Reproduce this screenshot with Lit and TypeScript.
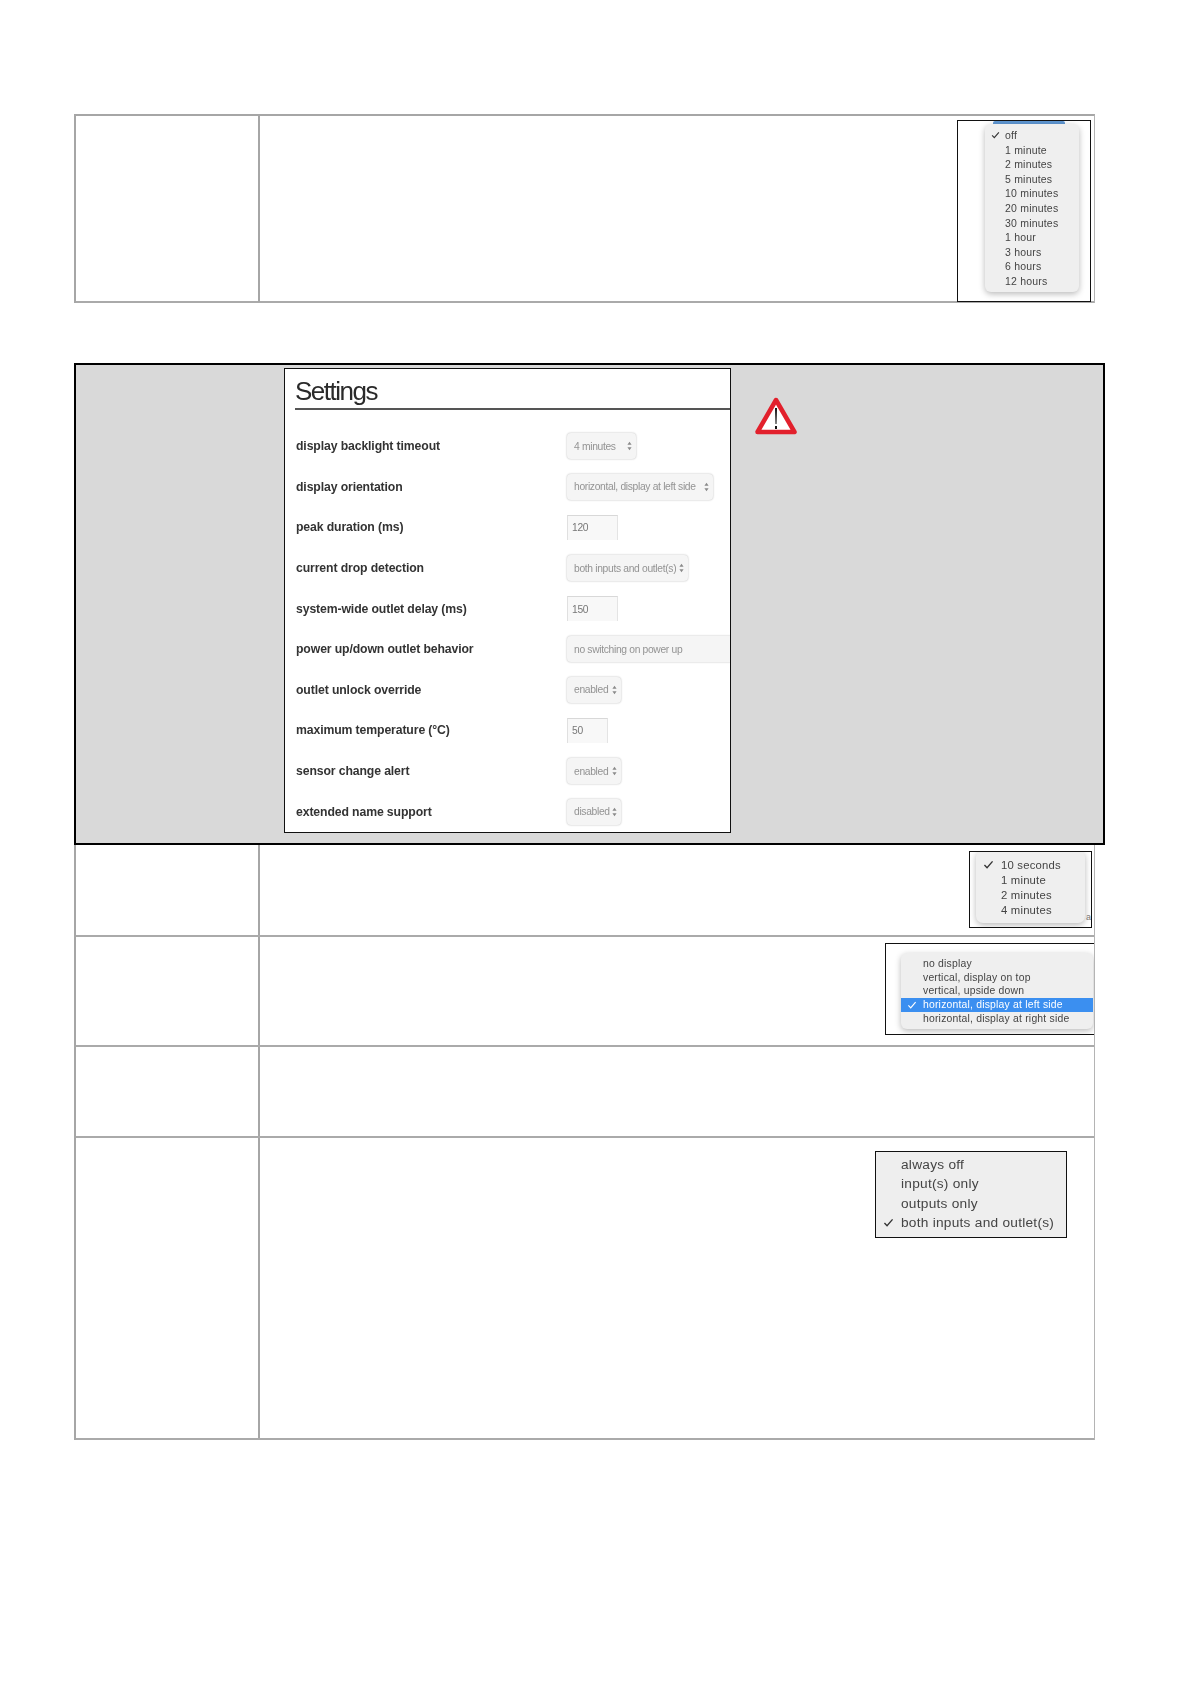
import { LitElement, html, css } from "lit";
import { customElement } from "lit/decorators.js";

const check = html`<svg class="check" viewBox="0 0 12 10"><path d="M1.5 5.5 L4.4 8.5 L10.5 1.5" fill="none" stroke="currentColor" stroke-width="1.5"/></svg>`;

type Item = [string, boolean?];
const menu = (cls: string, items: Item[], sel = -1) => html`<div class="menu ${cls}">
  ${items.map(([t, c], i) => html`<div class="item ${i === sel ? "sel" : ""}"><span class="slot">${c ? check : ""}</span><span>${t}</span></div>`)}
</div>`;

const caret = html`<svg class="caret" viewBox="0 0 6 11"><path d="M3 0.5 L5.5 4 L0.5 4 Z M3 10.5 L5.5 7 L0.5 7 Z" fill="#8a8a8a"/></svg>`;

const rows: [string, string, string][] = [
  ["display backlight timeout", "w69", "4 minutes"],
  ["display orientation", "w146", "horizontal, display at left side"],
  ["peak duration (ms)", "i51", "120"],
  ["current drop detection", "w121", "both inputs and outlet(s)"],
  ["system-wide outlet delay (ms)", "i51", "150"],
  ["power up/down outlet behavior", "wide", "no switching on power up"],
  ["outlet unlock override", "w54", "enabled"],
  ["maximum temperature (°C)", "i41", "50"],
  ["sensor change alert", "w54", "enabled"],
  ["extended name support", "w54", "disabled"],
];

@customElement("app-root")
export class AppRoot extends LitElement {
  static styles = css`
    :host { display: block; height: 1686px; background: #fff; font-family: "Liberation Sans", Arial, sans-serif; color: #333; }
    .page { padding: 114px 0 0 74px; display: flex; flex-direction: column; align-items: flex-start; }

    .table { width: 1021px; box-sizing: border-box; border-left: 2px solid #a6a6a6; border-right: 1px solid #b4b4b4; }
    .row { display: grid; grid-template-columns: 184px 1fr; border-bottom: 2px solid #aaa; box-sizing: border-box; }
    .row > .key { border-right: 2px solid #a6a6a6; }
    .row > .val { display: flex; justify-content: flex-end; align-items: flex-start; min-width: 0; }
    .t1 { border-top: 2px solid #a6a6a6; margin-bottom: 60px; }
    .r1 { height: 187px; }
    .r2 { height: 91.5px; }
    .r3 { height: 110px; }
    .r4 { height: 91px; }
    .r5 { height: 302px; }

    .shot { border: 1.5px solid #111; box-sizing: border-box; background: #fff; overflow: hidden; position: relative; display: flex; }
    .s1 { width: 134px; height: 182px; margin: 4px 3px 0 0; padding: 3px 0 0 27px; }
    .s2 { width: 123px; height: 77px; margin: 6px 2px 0 0; padding: 0 0 0 6px; }
    .s3 { width: 209px; height: 92px; margin: 6px 0 0 0; padding: 9px 0 0 15px; border-right: 0; }
    .s4 { width: 192px; height: 87px; margin: 13px 27px 0 0; background: #eee; }

    .menu { background: #efefef; border-radius: 6px; box-shadow: 0 2px 6px rgba(0,0,0,.28); letter-spacing: .2px; color: #444; filter: blur(.3px); box-sizing: border-box; }
    .item { display: flex; align-items: center; white-space: nowrap; }
    .slot { display: flex; justify-content: center; align-items: center; flex: none; }
    .check { display: block; color: #333; }
    .m1 { width: 94px; height: 168px; font-size: 10.5px; padding-top: 4px; position: relative; z-index: 1; }
    .m1 .item { height: 14.55px; }
    .m1 .slot { width: 20px; }
    .m1 .check { width: 9px; height: 8px; }
    .m2 { width: 109px; height: 73px; font-size: 11.3px; padding-top: 7px; border-radius: 7px; margin-top: -2px; }
    .m2 .item { height: 15.2px; }
    .m2 .slot { width: 25px; }
    .m2 .check { width: 11px; height: 9px; }
    .m3 { width: 192px; height: 76px; font-size: 10.4px; padding-top: 4px; }
    .m3 .item { height: 13.8px; }
    .m3 .slot { width: 22px; }
    .m3 .check { width: 10px; height: 8px; }
    .m3 .sel { background: #3b8ff0; color: #fff; }
    .m3 .sel .check { color: #fff; }
    .m4 { width: 100%; background: transparent; box-shadow: none; font-size: 13.7px; padding-top: 3px; border-radius: 0; letter-spacing: .25px; }
    .m4 .item { height: 19.5px; }
    .m4 .slot { width: 25px; }
    .m4 .check { width: 11px; height: 9px; }
    .sliver { position: absolute; left: 35px; top: 0; width: 72px; height: 3px; background: #5f97d3; border-radius: 2px 2px 0 0; }
    .edge { position: absolute; right: 0; bottom: 5px; font-size: 9px; color: #777; }

    .gray { width: 1031px; height: 482px; box-sizing: border-box; background: #d9d9d9; border: 2px solid #000; display: flex; padding: 3px 0 0 208px; gap: 24px; align-items: flex-start; }
    .settings { width: 447px; height: 465px; box-sizing: border-box; background: #fff; border: 1.5px solid #111; overflow: hidden; padding: 6px 0 0 10px; flex: none; }
    .title { font-size: 26px; line-height: 32px; color: #2a2a2a; height: 33px; border-bottom: 2px solid #555; letter-spacing: -1.5px; filter: blur(.3px); }
    .form { display: flex; flex-direction: column; padding-top: 16px; filter: blur(.3px); }
    .frow { display: grid; grid-template-columns: 272px 1fr; height: 40.6px; align-items: center; }
    .label { font-size: 12.25px; font-weight: 700; color: #333; letter-spacing: -.01em; padding-left: 1px; white-space: nowrap; }
    .ctl { box-sizing: border-box; height: 26px; background: #f5f5f5; border-radius: 4px; font-size: 10.3px; letter-spacing: -.33px; color: #939393; display: flex; align-items: center; justify-content: space-between; padding: 0 4px 0 7px; box-shadow: 0 0 2px rgba(0,0,0,.3); white-space: nowrap; }
    .caret { width: 5px; height: 10px; flex: none; }
    .w69 { width: 69px; }
    .w146 { width: 146px; }
    .w121 { width: 121px; }
    .w54 { width: 54px; }
    .wide { width: 172px; border-radius: 4px 0 0 4px; }
    .i51, .i41 { height: 25px; background: #f8f8f8; border-radius: 0; padding-left: 4px; border-top: 1.5px solid #d8d8d8; border-left: 1px solid #e0e0e0; border-right: 1px solid #e4e4e4; box-shadow: none; color: #777; }
    .i51 { width: 51px; }
    .i41 { width: 41px; }
    .warn { width: 42px; height: 38px; margin-top: 29px; flex: none; }
  `;

  render() {
    return html`<div class="page">
      <div class="table t1">
        <div class="row r1"><div class="key"></div><div class="val">
          <div class="shot s1"><div class="sliver"></div>
            ${menu("m1", [["off", true], ["1 minute"], ["2 minutes"], ["5 minutes"], ["10 minutes"], ["20 minutes"], ["30 minutes"], ["1 hour"], ["3 hours"], ["6 hours"], ["12 hours"]])}
          </div>
        </div></div>
      </div>

      <div class="gray">
        <div class="settings">
          <div class="title">Settings</div>
          <div class="form">
            ${rows.map(([l, c, v]) => html`<div class="frow"><div class="label">${l}</div><div class="ctl ${c}"><span>${v}</span>${c.startsWith("w") && c !== "wide" ? caret : ""}</div></div>`)}
          </div>
        </div>
        <svg class="warn" viewBox="0 0 42 38">
          <path d="M21 3 L39.5 35 L2.5 35 Z" fill="#fff" stroke="#e2202c" stroke-width="4.5" stroke-linejoin="round"/>
          <path d="M20 11 L22 11 L21.5 27 L20.5 27 Z M20 29 H22 V32 H20 Z" fill="#111"/>
        </svg>
      </div>

      <div class="table">
        <div class="row r2"><div class="key"></div><div class="val">
          <div class="shot s2">
            ${menu("m2", [["10 seconds", true], ["1 minute"], ["2 minutes"], ["4 minutes"]])}
            <span class="edge">a</span>
          </div>
        </div></div>
        <div class="row r3"><div class="key"></div><div class="val">
          <div class="shot s3">
            ${menu("m3", [["no display"], ["vertical, display on top"], ["vertical, upside down"], ["horizontal, display at left side", true], ["horizontal, display at right side"]], 3)}
          </div>
        </div></div>
        <div class="row r4"><div class="key"></div><div class="val"></div></div>
        <div class="row r5"><div class="key"></div><div class="val">
          <div class="shot s4">
            ${menu("m4", [["always off"], ["input(s) only"], ["outputs only"], ["both inputs and outlet(s)", true]])}
          </div>
        </div></div>
      </div>
    </div>`;
  }
}
